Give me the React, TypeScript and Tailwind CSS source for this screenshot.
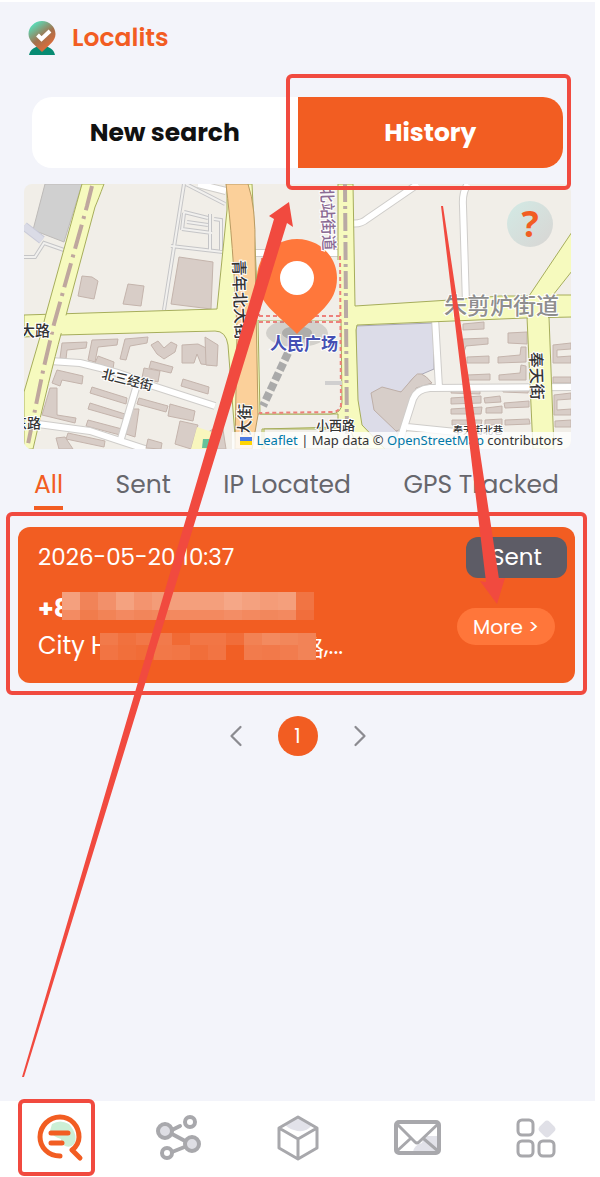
import { ChevronLeft, ChevronRight } from 'lucide-react'

const phoneMosaic = [
  ['#f4a07e', '#f18358', '#f2906a', '#f4a280', '#f3946f', '#f39c78', '#f49f7c', '#f49f7c', '#f49f7c', '#f5a787', '#f4a17f', '#f49c78', '#f49f7c', '#f17443'],
  ['#f38b62', '#f17c4c', '#f28356', '#f38960', '#f2855a', '#f2875c', '#f3895f', '#f3895f', '#f3895f', '#f38d65', '#f3895f', '#f2875c', '#f3895f', '#f16e3c'],
]

const addressMosaic = [
  ['#f27a4a', '#f1713e', '#f27747', '#f27a4b', '#f16a34', '#f27645', '#f27645', '#f16d39', '#f28254', '#f38a5f', '#f2875b', '#f28357'],
  ['#f27443', '#f16f3b', '#f16c37', '#f27848', '#f27645', '#f16e3a', '#f27443', '#f15f25', '#f27b4c', '#f2794a', '#f27c4e', '#f28357'],
]

const buildings = [
  'M62 343L87 342L86 348L67 350L66 359L60 358z',
  'M92 340L118 339L117 345L98 347L95 362L88 360z',
  'M125 339L148 337L147 343L130 346L126 360L120 359z',
  'M151 345L158 341L164 348L171 342L177 345L175 352L164 359L157 354z',
  'M182 345L198 344L208 349L210 365L201 364L197 354L194 363L182 363z',
  'M98 356L114 362L113 369L95 363z',
  'M151 361L173 367L171 373L149 368z',
  'M144 368L160 371L158 382L142 378z',
  'M57 370L83 376L82 384L62 380L60 386L52 383z',
  'M50 388L57 388L57 415L76 418L75 423L42 415z',
  'M92 387L127 398L126 404L90 393z',
  'M90 403L125 414L123 419L88 409z',
  'M88 420L122 429L120 435L86 426z',
  'M68 433L105 441L104 447L66 439z',
  'M139 398L168 406L166 412L137 404z',
  'M132 409L139 409L135 437L126 434z',
  'M170 404L195 411L193 421L168 416z',
  'M180 421L198 425L191 449L175 444z',
  'M183 379L209 387L208 394L181 386z',
  'M56 438L65 437L73 449L59 449z',
  'M148 439L162 443L161 449L146 448z',
  'M207 433L222 423L226 449L206 449z',
  'M205 337L218 345L217 366L206 365z',
  'M463 324L484 322L484 329L463 330z',
  'M463 339L488 338L488 344L466 346L464 352z',
  'M467 357L489 356L489 363L467 363z',
  'M467 375L490 374L490 380L467 380z',
  'M508 333L527 332L527 344L508 343z',
  'M498 357L520 355L521 347L526 347L526 362L498 363z',
  'M499 375L520 373L521 365L526 366L526 380L499 380z',
  'M452 389L480 389L480 394L451 393z',
  'M451 398L481 396L481 403L451 404z',
  'M451 409L482 407L481 414L451 414z',
  'M452 420L482 420L481 425L452 425z',
  'M484 398L500 396L501 402L485 403z',
  'M486 408L502 406L502 413L486 413z',
  'M485 420L502 419L502 425L485 425z',
  'M503 388L529 388L528 393L503 392z',
  'M504 403L529 401L529 407L505 408z',
  'M505 420L529 419L530 424L505 425z',
  'M553 345L571 343L571 349L557 350L557 357L571 356L571 363L553 363z',
  'M553 377L571 377L571 383L553 383z',
  'M554 395L571 393L571 399L557 400L557 410L571 409L571 415L554 415z',
  'M555 421L571 420L571 427L555 427z',
  'M82 276L92 277L98 281L94 299L78 296z',
  'M128 284L144 286L141 306L123 304z',
  'M179 257L213 262L211 309L171 304z',
]

function CityMap() {
  return (
    <svg viewBox="24 184 547 265" preserveAspectRatio="xMidYMid slice" className="h-full w-full" role="img" aria-label="Map">
      <rect x="24" y="184" width="548" height="265" fill="#f1eee8" />
      <path d="M45 184L82 184L64 242L33 230z" fill="#d0d0d0" stroke="#bdbab8" />
      <path d="M24 226L42 240" stroke="#c9cad8" strokeWidth="9" />
      <path d="M24 226L42 240" stroke="#dadbe6" strokeWidth="7" />
      <path d="M356 326L433 323L434 369L413 378L402 392L390 392L400 449L357 449z" fill="#dcdce8" stroke="#aaa9b7" />
      <path d="M371 393L382 387L401 392L414 377Q420 368 432 383L416 388L405 428L396 431L374 410z" fill="#d7cec9" stroke="#beafa8" />

      {/* footpaths */}
      <g fill="none" stroke="#c5c5c7" strokeWidth="4">
        <path d="M184 184L164 310M184 212L208 218M182 229L212 233M171 246L223 252M184 213L182 230M187 222L208 225M24 257H35L44 243L64 250M186 184L225 204M210 214V250M214 219L221 220V250" />
        <path d="M184 184L164 310M184 212L208 218M182 229L212 233M171 246L223 252M184 213L182 230M187 222L208 225M24 257H35L44 243L64 250M186 184L225 204M210 214V250M214 219L221 220V250" stroke="#f1f0ee" strokeWidth="2" />
      </g>

      <g fill="#d8cdc7" stroke="#c4b4ac" strokeWidth="1">
        {buildings.map((d) => (
          <path key={d} d={d} />
        ))}
      </g>
      <path d="M197 427L212 432L207 449H191z" fill="#f8f6bd" />
      <path d="M203 439h7v9h-8z" fill="#65c39b" />

      {/* side streets */}
      <g fill="none" strokeLinejoin="round">
        {['#cfcdca', '#ffffff'].map((stroke, i) => (
          <path
            key={stroke}
            stroke={stroke}
            strokeWidth={i === 0 ? 8 : 6}
            d="M50 361L80 363Q120 372 150 385L215 406M136 388L120 442M38 424L90 431L145 449M350 223Q360 225 367 219L418 184M468 184Q462 192 463 206L466 304M435 318L439 388M572 387L430 388Q417 389 413 399L400 440M407 427L456 432M198 184L226 191M255 253H345"
          />
        ))}
      </g>

      {/* main roads */}
      <g stroke="#a6ad5b" strokeWidth="1" fill="#f6fabe">
        <path d="M527 317H549L554 449H533z" />
        <path d="M24 315L217 309L227 210V184H252L258 308L338 308V184H353L355 306L450 300L500 296L529 296L572 232V271L553 295L572 295V317L525 318L357 325L356 330L358 400L362 425L385 449H262V429L338 427V414H236V449L228 345Q226 331 215 331L60 335L24 337z" />
        <path d="M82 184H104Q98 200 95 207L61 334Q50 375 33 449H24V392L40 337L46 314z" />
      </g>
      <path d="M48 316L215 310L226 316L222 330L62 333L44 336z" fill="#f6fabe" />
      <path d="M528 314H548V322H528z" fill="#f6fabe" />
      <path d="M226 184H248Q256 207 255 250L258 415L252 449H235L237 330Q233 240 226 184z" fill="#fbd09a" stroke="#b99a62" />
      <path d="M258 309L338 309L340 318H259z" fill="#f6fabe" />
      <path d="M92 186L87 206L54 324L43 371L27 449" fill="none" stroke="#bfa79e" strokeWidth="4" strokeDasharray="25 6 3 6" />

      {/* square */}
      <path d="M258 320H341L342 402Q342 414 330 414H260z" fill="#f1eee8" stroke="#a6ad5b" />
      <path d="M258 258L339 260V320H258z" fill="#f1eee8" />
      <path d="M340 256L341 405Q340 412 331 412L259 413M259 316H341M259 322H341M262 258L259 316" fill="none" stroke="#ed817c" strokeWidth="2" strokeDasharray="4 3" />
      <path d="M264 429H350L358 449H264z" fill="#f1eee8" stroke="#a6ad5b" />
      <path d="M345 184L347 440" stroke="#b9aaa4" strokeWidth="4" strokeDasharray="18 4 3 4" />
      <path d="M288 353L263 406" stroke="#aaa" strokeWidth="8" strokeDasharray="8 3" />
      <path d="M325 383H342" stroke="#d0cfcf" strokeWidth="4" />

      {/* pin */}
      <ellipse cx="297" cy="333" rx="31" ry="14" fill="#8a8a88" opacity=".3" />
      <ellipse cx="297" cy="333" rx="15" ry="7" fill="#777" opacity=".4" />
      <path d="M297 239C319 239 337 256 337 278C337 304 316 314 297 334C278 314 257 304 257 278C257 256 275 239 297 239z" fill="#ff773b" />
      <circle cx="297" cy="278" r="17" fill="#fff" />

      {/* labels */}
      <g className="font-['Noto_Sans_CJK_SC',sans-serif] font-medium" fill="#343434" stroke="#fff" strokeWidth="2" paintOrder="stroke" fontSize="16">
        <text x="20" y="336" fontSize="15">大路</text>
        <text x="13" y="428" fontSize="14">东路</text>
        <text transform="translate(101 378) rotate(14)" fontSize="13">北三经街</text>
        <text transform="translate(233 260) rotate(88)">青年北大街</text>
        <text transform="translate(250 436) rotate(-88)">大街</text>
        <text transform="translate(321 187) rotate(88)" fill="#8b6b94">北站街道</text>
        <text transform="translate(530 352) rotate(88)">奉天街</text>
        <text x="316" y="430" fontSize="13">小西路</text>
        <text x="453" y="434" fontSize="10">奉天街北巷</text>
        <text x="270" y="350" fontSize="17" fill="#4550b3" className="font-bold">人民广场</text>
        <text x="444" y="314" fontSize="23" fill="#8e8e8e">朱剪炉街道</text>
      </g>
    </svg>
  )
}

function Logo() {
  return (
    <svg viewBox="0 0 28 36" className="h-9 w-7" aria-hidden="true">
      <defs>
        <linearGradient id="pin" x1="0.1" y1="0" x2="0.75" y2="1">
          <stop offset=".1" stopColor="#58dcb8" />
          <stop offset=".55" stopColor="#a3714d" />
          <stop offset="1" stopColor="#f36a32" />
        </linearGradient>
      </defs>
      <path d="M1 35C2 29 8 26 14 26S26 29 27 35z" fill="#078b72" />
      <path d="M14 1C21.500 1 27.500 7 27.500 14C27.500 21 21 25 14 32C7 25 .5 21 .5 14C.5 7 6.500 1 14 1z" fill="url(#pin)" />
      <path d="M9.500 15L13.500 19L22 11" fill="none" stroke="#fff" strokeWidth="4" />
    </svg>
  )
}

function SearchIcon() {
  return (
    <svg viewBox="0 0 48 48" className="h-12 w-12" fill="none" strokeLinecap="round" aria-hidden="true">
      <path d="M16 10Q24 5 33 10Q43 22 38 30Q35 34 29 32Q25 30 25 25Q16 22 14 17z" fill="#ccefd6" />
      <path d="M24 42C12 42 4 33 4 23C4 12 13 3 24 3S43 12 43 23C43 29 40 33 36 36L44 44" stroke="#f25d22" strokeWidth="5" strokeLinejoin="round" />
      <path d="M15 19H32M15 29H26" stroke="#f25d22" strokeWidth="5" />
    </svg>
  )
}

function ShareIcon() {
  return (
    <svg viewBox="0 0 48 48" className="h-12 w-12" fill="none" stroke="#a8a8ac" strokeWidth="4" aria-hidden="true">
      <path d="M17 16L25 12M17 20L32 28M32 32L17 38" strokeLinecap="round" />
      <circle cx="10" cy="17" r="7" fill="#dedee4" />
      <circle cx="37" cy="30" r="7" fill="#dedee4" />
      <circle cx="35" cy="8" r="5" />
      <circle cx="12" cy="39" r="5" />
    </svg>
  )
}

function BoxIcon() {
  return (
    <svg viewBox="0 0 48 48" className="h-12 w-12" fill="none" stroke="#a8a8ac" strokeWidth="3" strokeLinejoin="round" aria-hidden="true">
      <path d="M11 10L24 3L38 11Q31 20 20 16Q13 14 11 10z" fill="#e2e2e9" stroke="none" />
      <path d="M24 3L43 14V34L24 45L5 34V14zM5 14L24 25L43 14M24 25V45" />
    </svg>
  )
}

function MailIcon() {
  return (
    <svg viewBox="0 0 48 48" className="h-12 w-12" fill="none" stroke="#a8a8ac" strokeWidth="4" strokeLinejoin="round" aria-hidden="true">
      <path d="M20 38Q21 31 29 29L31 22H45V38z" fill="#e2e2e9" stroke="none" />
      <rect x="3" y="8" width="43" height="31" rx="3" />
      <path d="M4 10L22 28Q24 30 26 28L45 10M4 37L17 25M45 37L31 25" strokeWidth="3" />
    </svg>
  )
}

function AppsIcon() {
  return (
    <svg viewBox="0 0 48 48" className="h-12 w-12" fill="none" stroke="#a8a8ac" strokeWidth="3" aria-hidden="true">
      <rect x="6" y="6" width="15" height="15" rx="4" />
      <rect x="6" y="27" width="15" height="15" rx="4" />
      <rect x="27" y="27" width="15" height="15" rx="4" />
      <rect x="28" y="8" width="14" height="14" rx="4" transform="rotate(45 35 15)" fill="#e0e0e7" stroke="none" />
    </svg>
  )
}

function Mosaic({ rows, heights }: { rows: string[][]; heights: string[] }) {
  return (
    <span className="block shrink-0" aria-hidden="true">
      {rows.map((row, i) => (
        <span key={i} className={`flex ${heights[i]}`}>
          {row.map((color, j) => (
            <span key={j} className="w-[18px]" style={{ backgroundColor: color }} />
          ))}
        </span>
      ))}
    </span>
  )
}

export default function App() {
  return (
    <div className="relative flex min-h-screen flex-col overflow-hidden bg-white pt-0.5 font-['Poppins','Inter',sans-serif]">
      <main className="mr-[5px] flex-1 bg-[#f3f4fa]">
        <header className="flex h-[95px] items-start gap-4 px-7 pt-[18px]">
          <Logo />
          <h1 className="text-[25px] leading-9 font-semibold text-[#f25d22]">Localits</h1>
        </header>

        <div className="mx-8 grid h-[71px] grid-cols-2 rounded-[20px] bg-white text-[25px] font-bold">
          <button type="button" className="rounded-l-[20px] text-[#111]">New search</button>
          <div className="relative">
            <button type="button" className="h-full w-full rounded-r-[20px] bg-[#f25d22] text-white">History</button>
            <div className="pointer-events-none absolute -top-[23px] -right-2 -bottom-[22px] -left-3 z-10 rounded-md border-4 border-[#f14a3f]" />
          </div>
        </div>

        <section className="relative mx-6 mt-4 h-[265px] overflow-hidden rounded-lg">
          <CityMap />
          <button
            type="button"
            aria-label="Help"
            className="absolute top-[17px] right-[18px] h-[46px] w-[46px] rounded-full bg-linear-to-br from-[#d2eae5] to-[#d8d5d3] font-['Noto_Sans',sans-serif] text-4xl leading-[46px] font-bold text-[#f25d22]"
          >
            ?
          </button>
          <div className="absolute right-0 bottom-0 flex h-[17px] items-center bg-white/80 px-2 font-['Noto_Sans',sans-serif] text-[13px] whitespace-pre text-[#333]">
            <svg viewBox="0 0 12 8" className="mr-1 h-2 w-3" aria-hidden="true">
              <path d="M0 0H12V4H0z" fill="#4c7be1" />
              <path d="M0 4H12V8H0z" fill="#ffd500" />
            </svg>
            <a href="#leaflet" className="text-[#0078a8]">Leaflet</a> | Map data © <a href="#osm" className="text-[#0078a8]">OpenStreetMap</a> contributors
          </div>
        </section>

        <nav className="mt-4 flex h-[45px] justify-between pr-9 pl-[34px] text-[25px] leading-10 whitespace-nowrap text-[#66666c]">
          <a href="#all" className="border-b-4 border-[#f25d22] text-[#f25d22]">All</a>
          <a href="#sent">Sent</a>
          <a href="#ip">IP Located</a>
          <a href="#gps">GPS Tracked</a>
        </nav>

        <section className="mt-0.5 mr-2 ml-1.5 rounded-md border-4 border-[#f14a3f] px-2 pt-[11px] pb-2">
          <article className="flex h-[156px] justify-between rounded-xl bg-[#f25d22] text-white">
            <div className="min-w-0 pt-3 pl-5 text-[23px] whitespace-nowrap">
              <time className="block h-[53px] leading-9">2026-05-20 10:37</time>
              <div className="flex h-[38px] text-[25px] leading-[34px] font-bold">
                <span className="w-6 overflow-hidden">+8</span>
                <Mosaic rows={phoneMosaic} heights={['h-[18px]', 'h-2.5']} />
              </div>
              <div className="flex items-center leading-8">
                <span className="w-[62px] overflow-hidden text-2xl">City H</span>
                <Mosaic rows={addressMosaic} heights={['h-3', 'h-[15px]']} />
                <span className="flex w-2 justify-end overflow-hidden font-['Noto_Sans_CJK_SC',sans-serif]">路</span>
                <span>,...</span>
              </div>
            </div>
            <div className="flex flex-col items-end pt-2.5 pr-2">
              <span className="flex h-[41px] w-[101px] items-center justify-center rounded-xl bg-[#5d5c66] text-[23px]">Sent</span>
              <button type="button" className="mt-[30px] mr-3 h-[37px] w-[98px] rounded-full bg-[#ff763a] text-xl">More &gt;</button>
            </div>
          </article>
        </section>

        <div className="mt-[21px] flex items-center justify-center gap-6 text-[#8b8b90]">
          <button type="button" aria-label="Previous page"><ChevronLeft size={36} strokeWidth={1.5} /></button>
          <button type="button" aria-current="page" className="h-10 w-10 rounded-full bg-[#f25d22] text-xl text-white">1</button>
          <button type="button" aria-label="Next page"><ChevronRight size={36} strokeWidth={1.5} /></button>
        </div>
      </main>

      <footer className="mr-[5px] grid h-[76px] grid-cols-5 items-center pb-0.5">
        <a href="#search" aria-label="Search" className="relative flex justify-center">
          <SearchIcon />
          <span className="absolute -top-[15px] -bottom-[14px] left-[18px] w-[77px] rounded-md border-4 border-[#f14a3f]" />
        </a>
        <a href="#share" aria-label="Share" className="flex justify-center"><ShareIcon /></a>
        <a href="#box" aria-label="Packages" className="flex justify-center"><BoxIcon /></a>
        <a href="#mail" aria-label="Messages" className="flex justify-center"><MailIcon /></a>
        <a href="#apps" aria-label="Apps" className="flex justify-center"><AppsIcon /></a>
      </footer>

      {/* pointer arrows */}
      <svg viewBox="0 0 600 1177" preserveAspectRatio="none" className="pointer-events-none absolute inset-0 z-20 h-full w-full" fill="#f14a3f" aria-hidden="true">
        <path d="M22 1077L274 219L269 216L289 202L293 227L287 223L24 1077z" />
        <path d="M441 206L443 206L499 579L505 578L497 604L480 581L486 582z" />
      </svg>
    </div>
  )
}
